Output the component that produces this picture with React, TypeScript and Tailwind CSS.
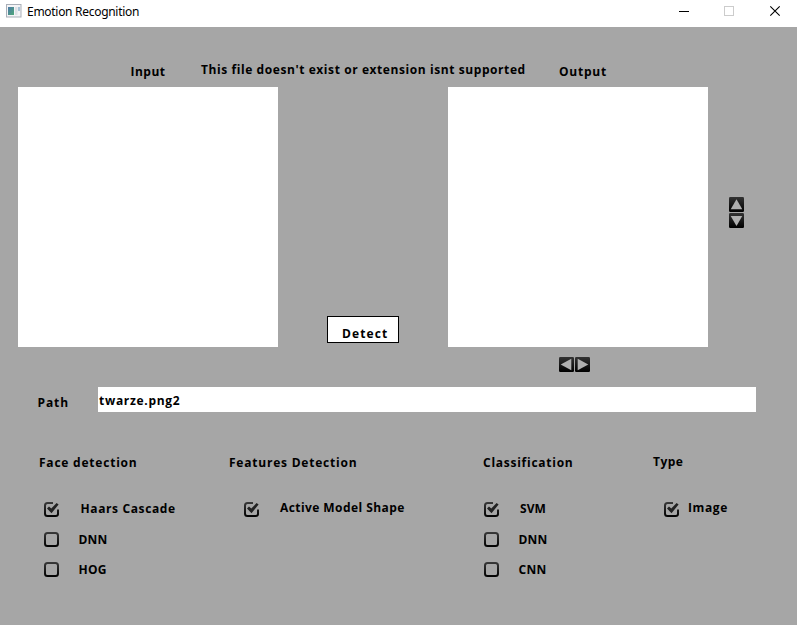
import React from "react";

function Label({ text, className = "" }: { text: string; className?: string }) {
  return (
    <span className={`block h-4 shrink-0 whitespace-nowrap text-[12px] font-bold leading-[18px] ${className}`}>
      {text}
    </span>
  );
}

function Check({ checked = false }: { checked?: boolean }) {
  return (
    <svg className="mt-px block shrink-0" width="16" height="16" viewBox="0 0 16 16" fill="none">
      <defs>
        <linearGradient id="ink" x1="0" y1="0" x2="0" y2="15" gradientUnits="userSpaceOnUse">
          <stop offset="0" stopColor="#3a3a3a" />
          <stop offset="1" stopColor="#000" />
        </linearGradient>
      </defs>
      {checked ? (
        <>
          <path d="M9 1H3.500Q1 1 1 3.500V11.500Q1 14 3.500 14H11.500Q14 14 14 12V7.500" stroke="url(#ink)" strokeWidth="2" />
          <path d="M3 6.500L5 4.600L7.300 6.600L12.600 1L14.600 2.500L7.500 11.200Z" fill="#222" />
        </>
      ) : (
        <rect x="1" y="1" width="13" height="13" rx="2.500" stroke="url(#ink)" strokeWidth="2" />
      )}
    </svg>
  );
}

function Arrow({ points }: { points: string }) {
  return (
    <svg className="block shrink-0" width="15" height="15" viewBox="0 0 15 15">
      <defs>
        <linearGradient id="btn" x1="0" y1="0" x2="0" y2="1">
          <stop offset="0" stopColor="#333" />
          <stop offset="1" stopColor="#000" />
        </linearGradient>
      </defs>
      <rect width="15" height="15" rx="1.2" fill="url(#btn)" />
      <polygon points={points} fill="#b0b0b0" />
    </svg>
  );
}

function TitleBar() {
  return (
    <header className="flex h-[27px] items-start bg-white">
      <svg className="ml-1.5 mt-1 block" width="16" height="14" viewBox="0 0 16 14">
        <defs>
          <linearGradient id="app" x1="0" y1="0" x2="1" y2="1">
            <stop offset="0" stopColor="#4c78a8" />
            <stop offset="1" stopColor="#4fa878" />
          </linearGradient>
        </defs>
        <rect x=".5" y=".5" width="14.5" height="12.5" fill="#f4f4f6" stroke="#a9afb8" />
        <rect x="2" y="3" width="6" height="8" fill="url(#app)" />
        <rect x="9" y="3" width="2.5" height="8" fill="#dde1e6" />
        <rect x="12" y="3" width="2" height="4" fill="#a9c4d8" />
      </svg>
      <span className="ml-[5px] mt-1 whitespace-nowrap font-['Noto_Sans','Open_Sans',sans-serif] text-[12px] leading-4 tracking-[-0.29px]">
        Emotion Recognition
      </span>
      <svg className="ml-auto block" width="120" height="27" viewBox="0 0 120 27" fill="none">
        <path d="M2 11.5H12" stroke="#000" />
        <rect x="47.5" y="6.500" width="9" height="9" stroke="#ccc" />
        <path d="M93.300 6.300L102.700 15.700M102.700 6.300L93.300 15.700" stroke="#000" strokeWidth="1.100" />
      </svg>
    </header>
  );
}

function Option({ checked, children }: { checked?: boolean; children: React.ReactNode }) {
  return (
    <div className="flex h-[30px] items-start">
      <Check checked={checked} />
      {children}
    </div>
  );
}

export default function App() {
  return (
    <div className="flex h-[625px] w-[797px] flex-col overflow-hidden bg-[#a6a6a6] font-['Open_Sans','Noto_Sans',sans-serif] text-black">
      <TitleBar />
      <div className="flex h-[60px] shrink-0 items-start">
        <Label text="Input" className="ml-[130.5px] mt-9 w-[70.5px] tracking-[0.5px]" />
        <Label text="This file doesn't exist or extension isnt supported" className="mt-[34px] w-[358px] tracking-[0.58px]" />
        <Label text="Output" className="mt-9 tracking-[0.75px]" />
      </div>
      <div className="flex h-[260px] shrink-0 items-start pl-[18px]">
        <div className="size-[260px] bg-white" />
        <button className="ml-[49px] mt-[229px] flex h-[27px] w-[72px] items-start border border-black bg-white pl-[14px] pt-2">
          <Label text="Detect" className="tracking-[1.1px]" />
        </button>
        <div className="ml-[49px] size-[260px] bg-white" />
        <div className="ml-[21px] mt-[110px] flex flex-col gap-px">
          <Arrow points="7.5,2.300 13.300,12.300 1.700,12.300" />
          <Arrow points="1.700,3 13.300,3 7.5,13" />
        </div>
      </div>
      <div className="flex h-10 shrink-0 items-start gap-px pl-[559px] pt-2.5">
        <Arrow points="1.700,7.5 12.300,1.700 12.300,13.300" />
        <Arrow points="2.700,1.700 13.300,7.5 2.700,13.300" />
      </div>
      <div className="flex h-[25px] shrink-0 items-start pl-[37.5px]">
        <Label text="Path" className="mt-[7px] w-[60.5px] tracking-[0.9px]" />
        <div className="h-[25px] w-[658px] bg-white pl-px pt-[5px]">
          <Label text="twarze.png2" className="tracking-[0.7px]" />
        </div>
      </div>
      <div className="flex shrink-0 items-start pt-[42px]">
        <section className="ml-[39px] w-[190px]">
          <Label text="Face detection" className="tracking-[0.78px]" />
          <div className="ml-[5px] mt-[31px] flex flex-col">
            <Option checked><Label text="Haars Cascade" className="-mt-px ml-[20.5px] tracking-[0.62px]" /></Option>
            <Option><Label text="DNN" className="ml-[18.5px] tracking-[0.2px]" /></Option>
            <Option><Label text="HOG" className="ml-[18.5px] tracking-[0.2px]" /></Option>
          </div>
        </section>
        <section className="w-[254px]">
          <Label text="Features Detection" className="tracking-[0.78px]" />
          <div className="ml-[15px] mt-[31px]">
            <Option checked><Label text="Active Model Shape" className="-mt-0.5 ml-5 tracking-[0.43px]" /></Option>
          </div>
        </section>
        <section className="w-[170px]">
          <Label text="Classification" className="tracking-[0.74px]" />
          <div className="ml-px mt-[31px] flex flex-col">
            <Option checked><Label text="SVM" className="-mt-px ml-5 tracking-[0.1px]" /></Option>
            <Option><Label text="DNN" className="ml-[18.5px] tracking-[0.2px]" /></Option>
            <Option><Label text="CNN" className="ml-[18.5px] tracking-[0.3px]" /></Option>
          </div>
        </section>
        <section className="-mt-px w-[120px]">
          <Label text="Type" className="tracking-[0.5px]" />
          <div className="ml-[11px] mt-8">
            <Option checked><Label text="Image" className="-mt-0.5 ml-2 tracking-[0.6px]" /></Option>
          </div>
        </section>
      </div>
    </div>
  );
}
